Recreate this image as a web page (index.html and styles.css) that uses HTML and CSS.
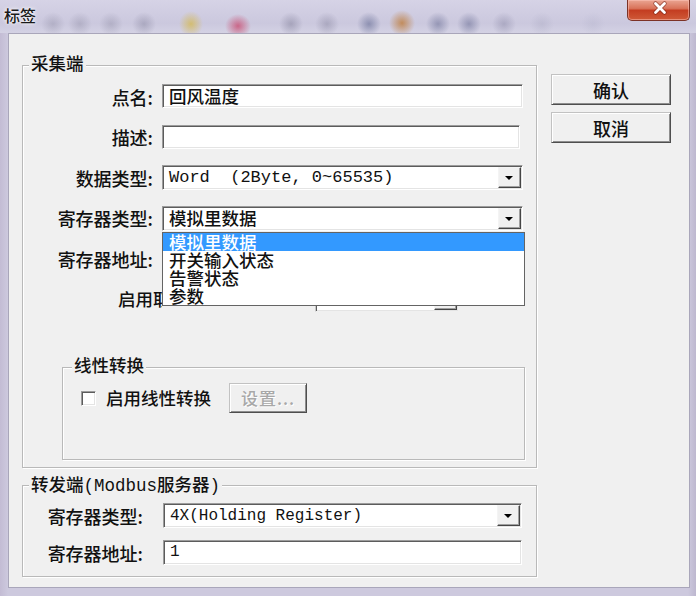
FILE: index.html
```html
<!DOCTYPE html>
<html lang="zh-CN">
<head>
    <meta charset="utf-8">
    <title>标签</title>
    <link rel="stylesheet" href="styles.css">
</head>
<body>
    <div class="window">
        <div class="titlebar">
            <span class="title">标签</span>
            <button class="close" title="关闭">
                <svg width="63" height="21" viewBox="0 0 63 21">
                    <path d="M28.5 4.5L37.5 13.5M37.5 4.5L28.5 13.5" stroke="#6a1c10" stroke-width="4.5" stroke-linecap="round" opacity="0.55" />
                    <path d="M28.5 4.5L37.5 13.5M37.5 4.5L28.5 13.5" stroke="#ffffff" stroke-width="2.8" stroke-linecap="round" />
                </svg>
            </button>
        </div>
        <div class="client">
            <div class="groups">
                <div class="group collect">
                    <div class="group-title">采集端</div>
                    <div class="form">
                        <label class="label">点名:</label>
                        <div class="field">回风温度</div>

                        <label class="label">描述:</label>
                        <div class="field narrow"></div>

                        <label class="label">数据类型:</label>
                        <div class="combo mono">
                            <span class="combo-text">Word  (2Byte, 0~65535)</span>
                            <span class="combo-btn"></span>
                        </div>

                        <label class="label">寄存器类型:</label>
                        <div class="combo">
                            <span class="combo-text">模拟里数据</span>
                            <span class="combo-btn"></span>
                            <ul class="dropdown">
                                <li class="selected">模拟里数据</li>
                                <li>开关输入状态</li>
                                <li>告警状态</li>
                                <li>参数</li>
                            </ul>
                        </div>

                        <label class="label">寄存器地址:</label>
                        <div class="field"></div>

                        <!-- mostly hidden behind the open list -->
                        <div class="wide-row">
                            <span class="plain clipped">启用取反</span>
                            <div class="combo small">
                                <span class="combo-text"></span>
                                <span class="combo-btn"></span>
                            </div>
                        </div>
                    </div>

                    <div class="group linear">
                        <div class="group-title">线性转换</div>
                        <div class="check-row">
                            <span class="checkbox"></span>
                            <span class="plain check-label">启用线性转换</span>
                            <button class="btn small-btn" disabled>设置...</button>
                        </div>
                    </div>
                </div>

                <div class="group forward">
                    <div class="group-title">转发端(Modbus服务器)</div>
                    <div class="form">
                        <label class="label">寄存器类型:</label>
                        <div class="combo mono small-mono">
                            <span class="combo-text">4X(Holding Register)</span>
                            <span class="combo-btn"></span>
                        </div>

                        <label class="label">寄存器地址:</label>
                        <div class="field mono small-mono">1</div>
                    </div>
                </div>
            </div>

            <div class="actions">
                <button class="btn">确认</button>
                <button class="btn">取消</button>
            </div>
        </div>
    </div>
</body>
</html>
```

FILE: styles.css
```css
html,
body {
    margin: 0px;
    width: 100%;
    height: 100%;
}

body {
    background: #cbc7dc;
    font-family: "Noto Sans CJK SC", sans-serif;
    font-weight: 500;
    color: #111;
}

.window {
    width: 696px;
    height: 596px;
    box-sizing: border-box;
    padding: 0px 6px 8px 8px;
    background: linear-gradient(90deg, #c3bcd4 0px, #cdc9de 8px, #cdc9de 688px, #bdb7cf 696px);
}

/* title bar with the blurred desktop showing through */
.titlebar {
    display: flex;
    justify-content: space-between;
    align-items: flex-start;
    height: 33px;
    margin: 0px -6px 0px -8px;
    padding: 0px 6px 0px 4px;
    background:
        radial-gradient(12px 12px at 53px 24px, rgba(120, 118, 142, 0.3), rgba(120, 118, 142, 0)),
        radial-gradient(12px 12px at 80px 24px, rgba(120, 118, 142, 0.3), rgba(120, 118, 142, 0)),
        radial-gradient(12px 12px at 111px 24px, rgba(120, 118, 142, 0.3), rgba(120, 118, 142, 0)),
        radial-gradient(12px 12px at 144px 24px, rgba(110, 108, 135, 0.35), rgba(110, 108, 135, 0)),
        radial-gradient(12px 13px at 191px 24px, rgba(214, 184, 70, 0.7), rgba(214, 184, 70, 0)),
        radial-gradient(13px 12px at 238px 26px, rgba(200, 50, 90, 0.65), rgba(200, 50, 90, 0)),
        radial-gradient(12px 12px at 291px 24px, rgba(110, 108, 135, 0.4), rgba(110, 108, 135, 0)),
        radial-gradient(12px 12px at 327px 24px, rgba(110, 108, 135, 0.35), rgba(110, 108, 135, 0)),
        radial-gradient(12px 12px at 369px 24px, rgba(90, 98, 140, 0.55), rgba(90, 98, 140, 0)),
        radial-gradient(13px 13px at 402px 23px, rgba(190, 120, 50, 0.75), rgba(190, 120, 50, 0)),
        radial-gradient(12px 12px at 438px 24px, rgba(95, 100, 140, 0.5), rgba(95, 100, 140, 0)),
        radial-gradient(12px 12px at 469px 24px, rgba(95, 100, 140, 0.5), rgba(95, 100, 140, 0)),
        radial-gradient(12px 12px at 504px 24px, rgba(120, 118, 150, 0.38), rgba(120, 118, 150, 0)),
        radial-gradient(12px 12px at 542px 24px, rgba(160, 160, 185, 0.3), rgba(160, 160, 185, 0)),
        radial-gradient(12px 12px at 593px 24px, rgba(170, 170, 195, 0.25), rgba(170, 170, 195, 0)),
        linear-gradient(#d6d3e6, #cbc8de 70%, #d4d2e4);
}

.title {
    margin-top: 5px;
    font-size: 16px;
    line-height: 20px;
    color: #1a1a1a;
    text-shadow: 0px 0px 4px #ffffff, 0px 0px 2px #ffffff;
}

.close {
    width: 63px;
    height: 21px;
    padding: 0px;
    border: 1px solid #7c3226;
    border-top: none;
    border-radius: 0px 0px 5px 5px;
    background: linear-gradient(#eaa592 0%, #d9735a 42%, #c43d21 52%, #cf5a38 100%);
    box-shadow: inset 0px 0px 0px 1px rgba(255, 200, 190, 0.5);
}

.close svg {
    display: block;
    margin: -1px 0px 0px -1px;
}

/* client area */
.client {
    display: flex;
    height: 555px;
    box-sizing: border-box;
    padding-left: 13px;
    border: 1px solid #a9a6ba;
    background: #f0f0f0;
}

.groups {
    display: flex;
    flex-direction: column;
    gap: 17px;
    width: 515px;
    padding-top: 31px;
}

.actions {
    display: flex;
    flex-direction: column;
    gap: 7px;
    margin-left: 14px;
    padding-top: 40px;
}

/* group boxes */
.group {
    border: 1px solid #b9b9b9;
    box-shadow: inset 1px 1px 0px #ffffff, 1px 1px 0px #ffffff;
}

.group-title {
    width: max-content;
    margin: -10px 0px 0px 6px;
    padding: 0px 2px;
    background: #f0f0f0;
    font-family: "Liberation Mono", "Noto Sans CJK SC", monospace;
    font-size: 17.5px;
    line-height: 18px;
}

.collect {
    padding-bottom: 7px;
}

.forward {
    padding-bottom: 11px;
}

.forward .group-title {
    margin-top: -9px;
}

.linear {
    margin: 55.5px 11px 0px 39px;
    padding-bottom: 46px;
}

.linear .group-title {
    margin-left: 9px;
}

/* label / control grid */
.form {
    display: grid;
    grid-template-columns: 130px 361px;
    grid-auto-rows: 25px;
    column-gap: 9px;
    row-gap: 15.5px;
    align-items: center;
    margin-top: 10px;
}

.forward .form {
    grid-template-columns: 120px 359px;
    column-gap: 20px;
    row-gap: 12px;
    margin-top: 8px;
}

.label {
    text-align: right;
    font-size: 18px;
    line-height: 20px;
}

.plain {
    font-size: 17.5px;
    line-height: 20px;
}

.clipped {
    width: 44px;
    overflow: hidden;
    white-space: nowrap;
}

.field,
.combo,
.checkbox {
    box-sizing: border-box;
    border: 1px solid;
    border-color: #9c9c9c #ffffff #ffffff #9c9c9c;
    box-shadow: inset 1px 1px 0px #5c5c5c, inset -1px -1px 0px #e4e4e4;
    background: #ffffff;
}

.field {
    height: 24px;
    padding-left: 6px;
    font-size: 17.5px;
    line-height: 22px;
    align-self: start;
}

.field.narrow {
    width: 358px;
}

.forward .field {
    height: 25px;
    line-height: 23px;
}

.combo {
    position: relative;
    display: flex;
    align-items: center;
    height: 25px;
    padding: 0px 1px 0px 6px;
    font-size: 17.5px;
}

.combo-text {
    flex: 1;
    white-space: pre;
    line-height: 20px;
}

.mono {
    font-family: "Liberation Mono", "Noto Sans CJK SC", monospace;
    font-weight: 400;
    font-size: 17px;
}

.small-mono {
    font-size: 16px;
}

.combo-btn {
    position: relative;
    flex: none;
    width: 23px;
    height: 21px;
    box-sizing: border-box;
    border: 1px solid;
    border-color: #f4f4f4 #454545 #454545 #f4f4f4;
    box-shadow: inset -1px -1px 0px #a0a0a0;
    background: #f0f0f0;
}

.combo-btn::after {
    content: "";
    position: absolute;
    left: 6px;
    top: 8px;
    border-top: 4px solid #000000;
    border-left: 4px solid transparent;
    border-right: 4px solid transparent;
}

/* open list of the register type combo */
.dropdown {
    position: absolute;
    top: calc(100% + 2px);
    left: -1px;
    right: -3px;
    z-index: 10;
    margin: 0px;
    padding: 0px;
    list-style: none;
    border: 1px solid #646464;
    background: #ffffff;
}

.dropdown li {
    height: 18px;
    padding-left: 6px;
    font-size: 17.5px;
    line-height: 18px;
}

.dropdown .selected {
    background: #3399ff;
    color: #ffffff;
}

.wide-row {
    grid-column: 1 / -1;
    display: flex;
    align-items: center;
    padding-left: 95px;
}

.combo.small {
    width: 144px;
    margin-left: 153px;
    border-color: #c8c8c8 #f0f0f0 #f0f0f0 #c8c8c8;
}

/* linear conversion row */
.check-row {
    display: flex;
    align-items: center;
    height: 30px;
    margin: 7px 0px 0px 18px;
}

.checkbox {
    width: 15px;
    height: 15px;
}

.check-label {
    margin-left: 10px;
}

/* push buttons */
.btn {
    width: 120px;
    height: 31px;
    padding: 0px;
    border: 1px solid;
    border-color: #c2c2c2 #4e4e4e #4e4e4e #c2c2c2;
    box-shadow: inset 1px 1px 0px #ffffff, inset -1px -1px 0px #8e8e8e;
    background: #f0f0f0;
    font-family: "Noto Sans CJK SC", sans-serif;
    font-weight: 500;
    font-size: 18px;
    line-height: 20px;
    color: #111;
}

.small-btn {
    width: 78px;
    height: 30px;
    margin-left: 18px;
    font-size: 17px;
    letter-spacing: 1px;
}

.btn:disabled {
    color: #a8a8a8;
    text-shadow: 1px 1px 0px #ffffff;
}
```
